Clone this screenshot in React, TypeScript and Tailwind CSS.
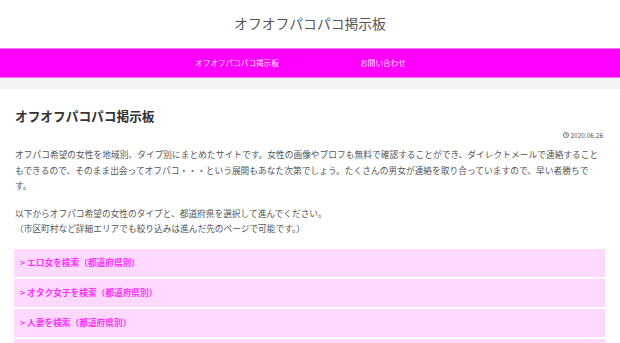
import React from "react";

const links = [
  "> エロ女を検索（都道府県別）",
  "> オタク女子を検索（都道府県別）",
  "> 人妻を検索（都道府県別）",
  "> 熟女を検索（都道府県別）",
];

export default function App() {
  return (
    <div className="w-[620px] h-[343px] overflow-hidden bg-white font-['Noto_Sans_CJK_JP','Noto_Sans',sans-serif]">
      <header className="h-[48px] flex items-center justify-center">
        <h1 className="text-[13.8px] text-[#555] leading-none">オフオフパコパコ掲示板</h1>
      </header>
      <nav className="h-[30px] bg-[#ff00ff] border-y border-[#ff77ff] flex justify-center items-center">
        <div className="w-[146px] text-center text-[7.6px] text-[#ffe6ff]">オフオフパコパコ掲示板</div>
        <div className="w-[146px] text-center text-[7.6px] text-[#ffe6ff]">お問い合わせ</div>
      </nav>
      <div className="h-[11px] bg-[#f3f4f5]" />
      <main className="px-[14px] pt-[17px]">
        <h2 className="text-[12.7px] font-bold text-[#333] leading-[19px] pl-[1px]">オフオフパコパコ掲示板</h2>
        <div className="mt-[5px] flex justify-end items-center gap-[2px] leading-[10px] text-[6.5px] text-[#555] pr-[3px]">
          <svg width="6" height="6" viewBox="0 0 12 12">
            <circle cx="6" cy="6" r="5" fill="none" stroke="#555" strokeWidth="1.6" />
            <path d="M6 3v3.3h2.4" fill="none" stroke="#555" strokeWidth="1.4" />
          </svg>
          <span>2020.06.26</span>
        </div>
        <p className="mt-[7px] text-[8.7px] leading-[15.5px] text-[#555] pl-[1px] whitespace-nowrap tracking-[0.04px]">
          オフパコ希望の女性を地域別、タイプ別にまとめたサイトです。女性の画像やプロフも無料で確認することができ、ダイレクトメールで連絡すること
          <br />
          もできるので、そのまま出会ってオフパコ・・・という展開もあなた次第でしょう。たくさんの男女が連絡を取り合っていますので、早い者勝ちで
          <br />
          す。
        </p>
        <p className="mt-[12.5px] text-[8.7px] leading-[15px] text-[#555] pl-[1px]">
          以下からオフパコ希望の女性のタイプと、都道府県を選択して進んでください。
          <br />
          （市区町村など詳細エリアでも絞り込みは進んだ先のページで可能です。）
        </p>
        <div className="mt-[13px] flex flex-col gap-[2px] w-[591px]">
          {links.map((l) => (
            <div key={l} className="h-[28px] bg-[#ffd9ff] flex items-center pl-[6px] text-[8.7px] font-bold text-[#ff33ff]">
              {l}
            </div>
          ))}
        </div>
      </main>
    </div>
  );
}
